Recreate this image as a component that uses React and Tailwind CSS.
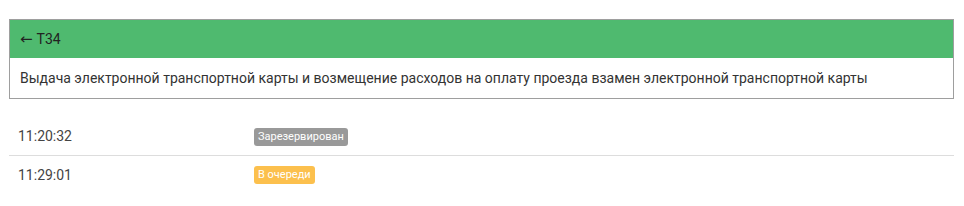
import React from 'react';

const rows = [
  { time: '11:20:32', status: 'Зарезервирован', cls: 'bg-[#999999]' },
  { time: '11:29:01', status: 'В очереди', cls: 'bg-[#fcc04d]' },
];

export default function App() {
  return (
    <div className="w-[964px] h-[206px] bg-white font-['Roboto',sans-serif] text-[#333] pt-[19px] px-[9px]">
      {/* Card */}
      <div className="border border-[#9e9e9e] w-[945px]">
        <div className="bg-[#4fba6f] h-[38px] flex items-center px-[10px] text-[14px] text-[#222]">
          <span className="font-['DejaVu_Sans',sans-serif] text-[15px] mr-[4px]">←</span>T34
        </div>
        <div className="h-[40px] flex items-center px-[10px] text-[14px] text-[#333]">
          Выдача электронной транспортной карты и возмещение расходов на оплату проезда взамен электронной транспортной карты
        </div>
      </div>

      {/* Rows */}
      <div className="mt-[19px] w-[945px]">
        {rows.map((r, i) => (
          <div
            key={r.time}
            className={
              'flex items-center h-[38px] text-[14px] ' +
              (i === 0 ? 'border-b border-[#dddddd]' : '')
            }
          >
            <div className="w-[245px] pl-[9px] text-[#444]">{r.time}</div>
            <span className={'text-white text-[11px] leading-[18px] px-[4px] rounded-[3px] ' + r.cls}>
              {r.status}
            </span>
          </div>
        ))}
      </div>
    </div>
  );
}
